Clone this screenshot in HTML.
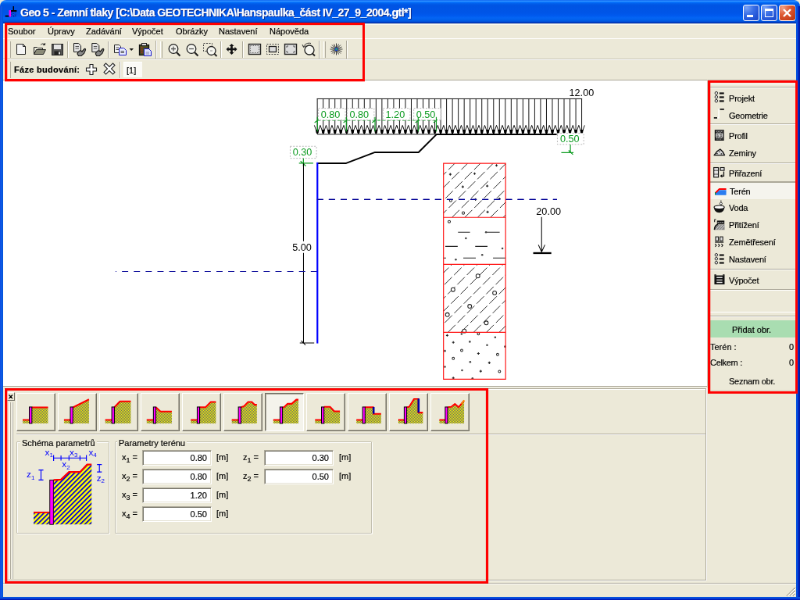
<!DOCTYPE html>
<html lang="cs">
<head>
<meta charset="utf-8">
<title>Geo 5 - Zemní tlaky</title>
<style>
html,body{margin:0;padding:0;}
body{width:800px;height:600px;overflow:hidden;background:#ece9d8;position:relative;}
#win{position:absolute;left:0;top:0;width:1024px;height:768px;background:#ece9d8;overflow:hidden;transform:scale(0.78125);transform-origin:0 0;will-change:transform;font-family:"Liberation Sans",sans-serif;font-size:11px;line-height:13px;color:#000;-webkit-text-stroke:0.18px #000;}
.abs{position:absolute;}
#bl{left:0;top:8px;width:4px;height:760px;background:linear-gradient(90deg,#0831d9 0,#166aee 1px,#0855dd 2px,#0453df 4px);}
#br{left:1019px;top:8px;width:5px;height:760px;background:linear-gradient(90deg,#0453df 0,#0a4fd8 2px,#0019cf 3px,#001ea0 4px);}
#bb{left:0;top:764px;width:1024px;height:4px;background:linear-gradient(180deg,#0453df 0,#0a4fd8 2px,#0019cf 3px,#001ea0 4px);}
#title{left:0;top:0;width:1024px;height:30px;background:linear-gradient(180deg,#0058ee 0,#3593ff 4%,#288eff 6%,#127dff 8%,#036ffc 10%,#0262ee 14%,#0057e5 20%,#0054e3 24%,#0055e8 56%,#0059ee 66%,#0464f4 76%,#005fea 86%,#0050d8 92%,#003cc0 95%,#0030b0 100%);border-radius:8px 8px 0 0;}
#title .t{-webkit-text-stroke:0.2px #fff;position:absolute;left:26px;top:9.9px;letter-spacing:-0.5px;font-weight:bold;font-size:14px;color:#fff;white-space:nowrap;text-shadow:1px 1px 0 #0a2a8a;}
.cb{position:absolute;top:6px;width:21px;height:21px;box-sizing:border-box;border:1px solid #fff;border-radius:3px;background:radial-gradient(circle at 20% 15%,#7aa2f5 0,#3a6fe6 40%,#2456d8 70%,#1c48c4 100%);}
.cb.x{background:radial-gradient(circle at 20% 15%,#f0a086 0,#de5b35 40%,#cd4520 70%,#b8340f 100%);}
.menu{position:absolute;top:34.2px;white-space:nowrap;}
.hl{position:absolute;height:1px;}
.vl{position:absolute;width:1px;}
.txt{position:absolute;white-space:nowrap;}
.inp{position:absolute;box-sizing:border-box;background:#fff;border:1px solid;border-color:#aca899 #fff #fff #aca899;box-shadow:inset 1px 1px 0 #77756a,inset -1px -1px 0 #e4e1d2;height:20px;width:89px;text-align:right;padding:3px 5px 0 0;line-height:13px;}
.grp{position:absolute;box-sizing:border-box;border:1px solid #c2bfae;border-radius:1px;box-shadow:1px 1px 0 #fff,inset 1px 1px 0 #fff;}
.grp b{position:absolute;left:7px;top:-5.5px;background:#ece9d8;padding:0 2px;font-weight:normal;white-space:nowrap;line-height:13px;}
.tb{position:absolute;top:503px;width:50px;height:49px;box-sizing:border-box;border:1px solid;border-color:#fff #716f64 #716f64 #fff;box-shadow:inset -1px -1px 0 #aca899;background:#ece9d8;}
.tb.sel{background:#f4f3eb;border-color:#716f64 #fff #fff #716f64;box-shadow:inset 1px 1px 0 #aca899;}
.tb svg{position:absolute;left:0;top:0;}
.rp{position:absolute;left:933px;white-space:nowrap;letter-spacing:-0.2px;}
.ri{position:absolute;left:913px;}
sub{font-size:9px;vertical-align:-3px;line-height:0;}
.red{position:absolute;box-sizing:border-box;border:2px solid #ff0000;}
</style>
</head>
<body>
<div id="win">
<!-- TITLEBAR -->
<div id="title" class="abs"><svg class="abs" style="left:0;top:0" width="38.4" height="30" viewBox="0 0 30 23.4375"><path d="M5.200 16.100H9.200" stroke="#000" stroke-width="1.400"/><path d="M10 10.200V16.700" stroke="#ff00ff" stroke-width="2"/><path d="M11 10.900H16.700" stroke="#000" stroke-width="1.500"/><path d="M13.500 6.200V10.500" stroke="#000" stroke-width="1.100"/><path d="M11.300 12.400L13 11.800M11.300 14.400L16.600 12.200M11.300 16.400L16.600 14.200M13.500 16.700L16.600 15.600" stroke="#141478" stroke-width="0.900" stroke-dasharray="0.900 0.900"/></svg><span class="t">Geo 5 - Zemní tlaky [C:\Data GEOTECHNIKA\Hanspaulka_část IV_27_9_2004.gtl*]</span>
<div class="cb" style="left:951px"><svg width="19" height="19"><rect x="4" y="12" width="8" height="3" fill="#fff"/></svg></div>
<div class="cb" style="left:974px"><svg width="19" height="19"><rect x="4.5" y="5.5" width="10" height="9" fill="none" stroke="#fff"/><rect x="4" y="4" width="11" height="3" fill="#fff"/></svg></div>
<div class="cb x" style="left:997px"><svg width="19" height="19"><path d="M5 5L14 14M14 5L5 14" stroke="#fff" stroke-width="2.4"/></svg></div>
</div>
<div class="hl" style="left:4px;top:31px;width:1016px;background:#fbfaf3"></div>
<!-- MENU BAR -->
<span class="menu" style="left:10px">Soubor</span>
<span class="menu" style="left:61px">Úpravy</span>
<span class="menu" style="left:110px">Zadávání</span>
<span class="menu" style="left:169px">Výpočet</span>
<span class="menu" style="left:225px">Obrázky</span>
<span class="menu" style="left:280px">Nastavení</span>
<span class="menu" style="left:345px">Nápověda</span>

<!-- TOOLBAR ROWS -->
<div class="hl" style="left:4px;top:49px;width:1016px;background:#fff"></div>
<div class="hl" style="left:4px;top:75px;width:1016px;background:#c5c2b2"></div>
<div class="hl" style="left:4px;top:76px;width:1016px;background:#fff"></div>
<div class="hl" style="left:4px;top:102px;width:1016px;background:#aca899"></div>
<!-- grips -->
<div class="vl" style="left:11px;top:53px;height:21px;background:#fff"></div><div class="vl" style="left:13px;top:53px;height:21px;background:#aca899"></div>
<div class="vl" style="left:205px;top:53px;height:21px;background:#fff"></div><div class="vl" style="left:207px;top:53px;height:21px;background:#aca899"></div>
<div class="vl" style="left:414px;top:53px;height:21px;background:#fff"></div><div class="vl" style="left:416px;top:53px;height:21px;background:#aca899"></div>
<div class="vl" style="left:11px;top:79px;height:21px;background:#fff"></div><div class="vl" style="left:13px;top:79px;height:21px;background:#aca899"></div>
<!-- toolbar ends -->
<div class="vl" style="left:199px;top:52px;height:23px;background:#aca899"></div><div class="vl" style="left:200px;top:52px;height:23px;background:#fff"></div>
<div class="vl" style="left:408px;top:52px;height:23px;background:#aca899"></div><div class="vl" style="left:409px;top:52px;height:23px;background:#fff"></div>
<div class="vl" style="left:443px;top:52px;height:23px;background:#aca899"></div><div class="vl" style="left:444px;top:52px;height:23px;background:#fff"></div>
<!-- separators -->
<div class="vl" style="left:86px;top:53px;height:21px;background:#aca899"></div><div class="vl" style="left:87px;top:53px;height:21px;background:#fff"></div>
<div class="vl" style="left:138px;top:53px;height:21px;background:#aca899"></div><div class="vl" style="left:139px;top:53px;height:21px;background:#fff"></div>
<div class="vl" style="left:282px;top:53px;height:21px;background:#aca899"></div><div class="vl" style="left:283px;top:53px;height:21px;background:#fff"></div>
<div class="vl" style="left:310px;top:53px;height:21px;background:#aca899"></div><div class="vl" style="left:311px;top:53px;height:21px;background:#fff"></div>
<div class="vl" style="left:153px;top:79px;height:21px;background:#aca899"></div><div class="vl" style="left:154px;top:79px;height:21px;background:#fff"></div>
<!-- ICONS row 1 -->
<svg class="abs" style="left:0;top:50px" width="460" height="26" viewBox="0 0 460 26">
<!-- new -->
<path d="M21.5 6.5H29.5L32.5 9.5V19.5H21.5Z" fill="#f4f4f4" stroke="#222"/><path d="M29.5 6.5V9.5H32.5" fill="none" stroke="#222"/>
<!-- open -->
<path d="M43.5 19.5V10.5H47.5L48.5 11.5H54.5V13.5" fill="#e8e8d8" stroke="#222"/><path d="M43.5 19.5L46.5 13.5H58.5L55.5 19.5Z" fill="#8a8a78" stroke="#222"/><path d="M52 7.5C54 5.5 56 5.5 57.5 7.5M57.5 7.5V5M57.5 7.5H55" fill="none" stroke="#222"/>
<!-- save -->
<rect x="66.500" y="6.500" width="14" height="14" fill="#555" stroke="#222"/><rect x="69" y="7" width="9" height="6" fill="#e4e4e4"/><rect x="69.500" y="15.500" width="8" height="5" fill="#222"/><rect x="75" y="16.500" width="2" height="3" fill="#ddd"/>
<!-- doc+hand 1 -->
<g id="dh"><path d="M94.500 5.500H100.500L103.500 8.500V16.500H94.500Z" fill="#e2e2e2" stroke="#1a1a1a"/><path d="M96.500 9.500H101M96.500 12H101" stroke="#555"/><path d="M99 19C100 15 103 14 105 16L108 12.500C109.500 12 110 13.500 109 15L107.500 18.500L104 21.500H100.500Z" fill="#8a8a8a" stroke="#1a1a1a" stroke-width="1.200"/></g>
<use href="#dh" x="23.300"/>
<!-- copy -->
<path d="M146.500 7.500H152.500L154.500 9.500V17.500H146.500Z" fill="#f2f2f2" stroke="#222"/><path d="M148.500 11H152M148.500 13.500H152" stroke="#444"/>
<path d="M152.500 11.500H158.500L161.500 14.500V20.500H152.500Z" fill="#e8ecff" stroke="#1a1ac8"/><path d="M154.500 15.500H159M154.500 17.500H159" stroke="#444" />
<path d="M165.500 12H171L168.250 15Z" fill="#111"/>
<!-- paste -->
<rect x="178.500" y="7.500" width="12" height="13" fill="#4a4a20" stroke="#111" stroke-width="1.300"/><rect x="181.500" y="5.500" width="6" height="3" fill="#ddd" stroke="#222"/><path d="M180.500 11h2M180.500 14h2M180.500 17h2" stroke="#d22"/>
<path d="M184.500 12.500H190.500L193.500 15.500V21.500H184.500Z" fill="#dfe4ff" stroke="#1a1ac8"/><path d="M186.500 17H191M186.500 19H191" stroke="#88a"/>
<!-- zoom + -->
<circle cx="222" cy="12.500" r="5.800" fill="#f6f6f0" stroke="#222" stroke-width="1.300"/><path d="M226 17L230.500 21.500" stroke="#222" stroke-width="2.200"/><path d="M219 12.500H225M222 9.500V15.500" stroke="#555" stroke-width="1.300"/>
<!-- zoom - -->
<circle cx="245" cy="12.500" r="5.800" fill="#f6f6f0" stroke="#222" stroke-width="1.300"/><path d="M249 17L253.500 21.500" stroke="#222" stroke-width="2.200"/><path d="M242 12.500H248" stroke="#555" stroke-width="1.300"/>
<!-- zoom rect -->
<rect x="260.500" y="5.500" width="11" height="10" fill="none" stroke="#444" stroke-dasharray="2 1.500"/><circle cx="270.500" cy="15" r="5.500" fill="#f6f6f0" stroke="#222" stroke-width="1.300"/><path d="M274.500 19L277.500 22" stroke="#222" stroke-width="2"/><path d="M269 15h3" stroke="#888"/>
<!-- pan -->
<path transform="translate(296.500 13) scale(0.880) translate(-296.500 -13)" d="M296.500 5L300 8.500H298V11.500H301V9.500L304.500 13L301 16.500V14.500H298V17.500H300L296.500 21L293 17.500H295V14.500H292V16.500L288.500 13L292 9.500V11.500H295V8.500H293Z" fill="#111"/>
<!-- rect1 -->
<rect x="318.500" y="6.500" width="15" height="13" fill="#ddd" stroke="#222" stroke-width="1.400"/><rect x="320.500" y="8.500" width="11" height="9" fill="none" stroke="#666" stroke-dasharray="1.500 1.500"/>
<!-- rect2 -->
<rect x="341.500" y="6.500" width="15" height="13" fill="none" stroke="#444" stroke-dasharray="2 1.500"/><rect x="344.500" y="9.500" width="9" height="7" fill="#ddd" stroke="#222" stroke-width="1.300"/>
<!-- rect3 -->
<rect x="364.500" y="6.500" width="15" height="13" fill="#ddd" stroke="#222" stroke-width="1.400"/><path d="M367 11V9H369M375 9H377V11M377 15V17H375M369 17H367V15" fill="none" stroke="#555"/>
<!-- rotate -->
<circle cx="396" cy="14" r="6" fill="#f6f6f0" stroke="#222" stroke-width="1.300"/><path d="M388.500 10C390 6 394 4.500 398 5.500" fill="none" stroke="#333"/><path d="M387 7L388.500 10.500L391.500 8.500" fill="none" stroke="#333"/><path d="M400 18.500L403 21.500" stroke="#222" stroke-width="2"/>
<!-- star -->
<path d="M430.500 5.500V20.500M422.500 13H438.500M425 7.500L436 18.500M436 7.500L425 18.500M427.500 6.500L433.500 19.500M433.500 6.500L427.500 19.500M423.500 10L437.500 16M437.500 10L423.500 16" stroke="#222" stroke-width="0.900"/><circle cx="430.500" cy="13" r="2.200" fill="#1a4ad0"/><circle cx="430.500" cy="13" r="1" fill="#3c3"/>
</svg>
<!-- row 2 -->
<span class="txt" style="left:18px;top:82.5px;font-weight:bold;letter-spacing:0.3px">Fáze budování:</span>
<svg class="abs" style="left:100px;top:76px" width="100" height="26" viewBox="100 0 100 26">
<path d="M115 6.500H119V11H123.500V15H119V19.500H115V15H110.500V11H115Z" fill="#fff" stroke="#222" stroke-width="1.100"/>
<path d="M133 7.500L135.500 5L140 9.500L144.500 5L147 7.500L142.500 12L147 16.500L144.500 19L140 14.500L135.500 19L133 16.500L137.500 12Z" fill="#fff" stroke="#2a2a2a" stroke-width="1.1"/>
</svg>
<div class="abs" style="left:158px;top:79px;width:24px;height:20px;background:#fbfaf6;border-left:1px solid #fff;border-top:1px solid #fff;box-sizing:border-box"></div>
<span class="txt" style="left:162px;top:84px">[1]</span>

<div class="abs" style="left:4px;top:103px;width:901px;height:391px;background:#fff"></div>
<svg class="abs" style="left:0;top:0" width="1024" height="768" viewBox="0 0 800 600" font-family="'Liberation Sans',sans-serif" font-size="9.9">
<defs><clipPath id="c1"><rect x="443.5" y="163.4" width="62" height="54"/></clipPath><clipPath id="c3"><rect x="443.5" y="264.3" width="62" height="68"/></clipPath></defs>
<path d="M317.30 98.80V133.30M323.18 98.80V133.30M329.05 98.80V133.30M334.93 98.80V133.30M340.80 98.80V133.30M346.68 98.80V133.30M352.55 98.80V133.30M358.43 98.80V133.30M364.30 98.80V133.30M370.18 98.80V133.30M376.06 98.80V133.30M381.93 98.80V133.30M387.81 98.80V133.30M393.68 98.80V133.30M399.56 98.80V133.30M405.43 98.80V133.30M411.31 98.80V133.30M417.18 98.80V133.30M423.06 98.80V133.30M428.94 98.80V133.30M434.81 98.80V133.30M440.69 98.80V133.30M446.56 98.80V133.30M452.44 98.80V133.30M458.31 98.80V133.30M464.19 98.80V133.30M470.06 98.80V133.30M475.94 98.80V133.30M481.82 98.80V133.30M487.69 98.80V133.30M493.57 98.80V133.30M499.44 98.80V133.30M505.32 98.80V133.30M511.19 98.80V133.30M517.07 98.80V133.30M522.94 98.80V133.30M528.82 98.80V133.30M534.70 98.80V133.30M540.57 98.80V133.30M546.45 98.80V133.30M552.32 98.80V133.30M558.20 98.80V133.30M564.07 98.80V133.30M569.95 98.80V133.30M575.82 98.80V133.30M581.70 98.80V133.30" stroke="#000" stroke-width="0.72" fill="none"/>
<path d="M316.90 98.80H582.10" stroke="#000" stroke-width="0.72"/>
<path d="M317.30 134.30H581.70" stroke="#000" stroke-width="0.72"/>
<path d="M314.36 125.30L317.30 133.60L320.24 125.30L323.18 133.60L326.11 125.30L329.05 133.60L331.99 125.30L334.93 133.60L337.86 125.30L340.80 133.60L343.74 125.30L346.68 133.60L349.62 125.30L352.55 133.60L355.49 125.30L358.43 133.60L361.37 125.30L364.30 133.60L367.24 125.30L370.18 133.60L373.12 125.30L376.06 133.60L378.99 125.30L381.93 133.60L384.87 125.30L387.81 133.60L390.74 125.30L393.68 133.60L396.62 125.30L399.56 133.60L402.50 125.30L405.43 133.60L408.37 125.30L411.31 133.60L414.25 125.30L417.18 133.60L420.12 125.30L423.06 133.60L426.00 125.30L428.94 133.60L431.87 125.30L434.81 133.60L437.75 125.30L440.69 133.60L443.62 125.30L446.56 133.60L449.50 125.30L452.44 133.60L455.38 125.30L458.31 133.60L461.25 125.30L464.19 133.60L467.13 125.30L470.06 133.60L473.00 125.30L475.94 133.60L478.88 125.30L481.82 133.60L484.75 125.30L487.69 133.60L490.63 125.30L493.57 133.60L496.50 125.30L499.44 133.60L502.38 125.30L505.32 133.60L508.26 125.30L511.19 133.60L514.13 125.30L517.07 133.60L520.01 125.30L522.94 133.60L525.88 125.30L528.82 133.60L531.76 125.30L534.70 133.60L537.63 125.30L540.57 133.60L543.51 125.30L546.45 133.60L549.38 125.30L552.32 133.60L555.26 125.30L558.20 133.60L561.14 125.30L564.07 133.60L567.01 125.30L569.95 133.60L572.89 125.30L575.82 133.60L578.76 125.30L581.70 133.60L584.64 125.30" stroke="#000" stroke-width="0.72" fill="none" stroke-linejoin="miter"/>
<path d="M315.80 129.60L318.80 129.60L318.55 132.60L317.30 134.30L316.05 132.60ZM321.68 129.60L324.68 129.60L324.43 132.60L323.18 134.30L321.93 132.60ZM327.55 129.60L330.55 129.60L330.30 132.60L329.05 134.30L327.80 132.60ZM333.43 129.60L336.43 129.60L336.18 132.60L334.93 134.30L333.68 132.60ZM339.30 129.60L342.30 129.60L342.05 132.60L340.80 134.30L339.55 132.60ZM345.18 129.60L348.18 129.60L347.93 132.60L346.68 134.30L345.43 132.60ZM351.05 129.60L354.05 129.60L353.80 132.60L352.55 134.30L351.30 132.60ZM356.93 129.60L359.93 129.60L359.68 132.60L358.43 134.30L357.18 132.60ZM362.80 129.60L365.80 129.60L365.55 132.60L364.30 134.30L363.05 132.60ZM368.68 129.60L371.68 129.60L371.43 132.60L370.18 134.30L368.93 132.60ZM374.56 129.60L377.56 129.60L377.31 132.60L376.06 134.30L374.81 132.60ZM380.43 129.60L383.43 129.60L383.18 132.60L381.93 134.30L380.68 132.60ZM386.31 129.60L389.31 129.60L389.06 132.60L387.81 134.30L386.56 132.60ZM392.18 129.60L395.18 129.60L394.93 132.60L393.68 134.30L392.43 132.60ZM398.06 129.60L401.06 129.60L400.81 132.60L399.56 134.30L398.31 132.60ZM403.93 129.60L406.93 129.60L406.68 132.60L405.43 134.30L404.18 132.60ZM409.81 129.60L412.81 129.60L412.56 132.60L411.31 134.30L410.06 132.60ZM415.68 129.60L418.68 129.60L418.43 132.60L417.18 134.30L415.93 132.60ZM421.56 129.60L424.56 129.60L424.31 132.60L423.06 134.30L421.81 132.60ZM427.44 129.60L430.44 129.60L430.19 132.60L428.94 134.30L427.69 132.60ZM433.31 129.60L436.31 129.60L436.06 132.60L434.81 134.30L433.56 132.60ZM439.19 129.60L442.19 129.60L441.94 132.60L440.69 134.30L439.44 132.60ZM445.06 129.60L448.06 129.60L447.81 132.60L446.56 134.30L445.31 132.60ZM450.94 129.60L453.94 129.60L453.69 132.60L452.44 134.30L451.19 132.60ZM456.81 129.60L459.81 129.60L459.56 132.60L458.31 134.30L457.06 132.60ZM462.69 129.60L465.69 129.60L465.44 132.60L464.19 134.30L462.94 132.60ZM468.56 129.60L471.56 129.60L471.31 132.60L470.06 134.30L468.81 132.60ZM474.44 129.60L477.44 129.60L477.19 132.60L475.94 134.30L474.69 132.60ZM480.32 129.60L483.32 129.60L483.07 132.60L481.82 134.30L480.57 132.60ZM486.19 129.60L489.19 129.60L488.94 132.60L487.69 134.30L486.44 132.60ZM492.07 129.60L495.07 129.60L494.82 132.60L493.57 134.30L492.32 132.60ZM497.94 129.60L500.94 129.60L500.69 132.60L499.44 134.30L498.19 132.60ZM503.82 129.60L506.82 129.60L506.57 132.60L505.32 134.30L504.07 132.60ZM509.69 129.60L512.69 129.60L512.44 132.60L511.19 134.30L509.94 132.60ZM515.57 129.60L518.57 129.60L518.32 132.60L517.07 134.30L515.82 132.60ZM521.44 129.60L524.44 129.60L524.19 132.60L522.94 134.30L521.69 132.60ZM527.32 129.60L530.32 129.60L530.07 132.60L528.82 134.30L527.57 132.60ZM533.20 129.60L536.20 129.60L535.95 132.60L534.70 134.30L533.45 132.60ZM539.07 129.60L542.07 129.60L541.82 132.60L540.57 134.30L539.32 132.60ZM544.95 129.60L547.95 129.60L547.70 132.60L546.45 134.30L545.20 132.60ZM550.82 129.60L553.82 129.60L553.57 132.60L552.32 134.30L551.07 132.60ZM556.70 129.60L559.70 129.60L559.45 132.60L558.20 134.30L556.95 132.60ZM562.57 129.60L565.57 129.60L565.32 132.60L564.07 134.30L562.82 132.60ZM568.45 129.60L571.45 129.60L571.20 132.60L569.95 134.30L568.70 132.60ZM574.32 129.60L577.32 129.60L577.07 132.60L575.82 134.30L574.57 132.60ZM580.20 129.60L583.20 129.60L582.95 132.60L581.70 134.30L580.45 132.60Z" fill="#000"/>
<path d="M317.4 120.3H436.3" stroke="#0a9a1e" stroke-width="0.8" stroke-dasharray="3 2"/>
<rect x="318.4" y="108.3" width="27.0" height="11.8" fill="#fff" stroke="#b0b0b0" stroke-width="0.7" stroke-dasharray="1.5 1.5"/>
<text x="320.9" y="117.7" fill="#0a9a1e">0.80</text>
<rect x="347.1" y="108.3" width="27.0" height="11.8" fill="#fff" stroke="#b0b0b0" stroke-width="0.7" stroke-dasharray="1.5 1.5"/>
<text x="349.6" y="117.7" fill="#0a9a1e">0.80</text>
<rect x="383.1" y="108.3" width="27.0" height="11.8" fill="#fff" stroke="#b0b0b0" stroke-width="0.7" stroke-dasharray="1.5 1.5"/>
<text x="385.6" y="117.7" fill="#0a9a1e">1.20</text>
<rect x="413.8" y="108.3" width="27.0" height="11.8" fill="#fff" stroke="#b0b0b0" stroke-width="0.7" stroke-dasharray="1.5 1.5"/>
<text x="416.2" y="117.7" fill="#0a9a1e">0.50</text>
<path d="M317.4 117V131.5M314.6 122.6L318.4 119.6" stroke="#0a9a1e" stroke-width="0.9" fill="none"/>
<path d="M346.3 117V131.5M343.5 122.6L347.3 119.6" stroke="#0a9a1e" stroke-width="0.9" fill="none"/>
<path d="M375.0 117V131.5M372.2 122.6L376.0 119.6" stroke="#0a9a1e" stroke-width="0.9" fill="none"/>
<path d="M418.2 117V131.5M415.4 122.6L419.2 119.6" stroke="#0a9a1e" stroke-width="0.9" fill="none"/>
<path d="M436.3 117V131.5M433.5 122.6L437.3 119.6" stroke="#0a9a1e" stroke-width="0.9" fill="none"/>
<text x="569.2" y="95.9" fill="#000">12.00</text>
<path d="M317 163.2H346.2L375 152.3H418.5L436.6 134.3H556.5" stroke="#000" stroke-width="1.55" fill="none" stroke-linejoin="round"/>
<rect x="557.4" y="133.2" width="26.3" height="11.2" fill="#fff" stroke="#b0b0b0" stroke-width="0.7" stroke-dasharray="1.5 1.5"/>
<text x="560.2" y="141.8" fill="#0a9a1e">0.50</text>
<path d="M570.4 144.5V153.2M561.3 152.6H573.5M568.6 150.4L573 154.6" stroke="#0a9a1e" stroke-width="0.9" fill="none"/>
<rect x="290.2" y="146.3" width="26.3" height="12" fill="#fff" stroke="#b0b0b0" stroke-width="0.7" stroke-dasharray="1.5 1.5"/>
<text x="292.8" y="155.7" fill="#0a9a1e">0.30</text>
<path d="M303.4 158.4V166.5M299 163.2H313.2M300.5 161L305.8 166" stroke="#0a9a1e" stroke-width="0.9" fill="none"/>
<path d="M303.5 163.5V241.2M303.5 252.9V343.3M299.8 343H314.2M301.2 340.8L305.5 345" stroke="#000" stroke-width="0.8" fill="none"/>
<text x="292.3" y="250.9" fill="#000">5.00</text>
<path d="M317 199.5H557" stroke="#10109c" stroke-width="0.85" stroke-dasharray="6.2 5.6"/>
<path d="M317 271.5H115.6" stroke="#10109c" stroke-width="0.85" stroke-dasharray="6.2 5.6"/>
<path d="M317.4 162.4V343.4" stroke="#0000ff" stroke-width="1.7"/>
<path d="M324.0 217.4L380.0 161.4M336.8 217.4L392.8 161.4M349.6 217.4L405.6 161.4M362.4 217.4L418.4 161.4M375.2 217.4L431.2 161.4M388.0 217.4L444.0 161.4M400.8 217.4L456.8 161.4M413.6 217.4L469.6 161.4M426.4 217.4L482.4 161.4M439.2 217.4L495.2 161.4M452.0 217.4L508.0 161.4M464.8 217.4L520.8 161.4M477.6 217.4L533.6 161.4M490.4 217.4L546.4 161.4M503.2 217.4L559.2 161.4" stroke="#222" stroke-width="0.75" stroke-dasharray="10.5 3" fill="none" clip-path="url(#c1)"/>
<path d="M320.0 332.3L390.0 262.3M332.8 332.3L402.8 262.3M345.6 332.3L415.6 262.3M358.4 332.3L428.4 262.3M371.2 332.3L441.2 262.3M384.0 332.3L454.0 262.3M396.8 332.3L466.8 262.3M409.6 332.3L479.6 262.3M422.4 332.3L492.4 262.3M435.2 332.3L505.2 262.3M448.0 332.3L518.0 262.3M460.8 332.3L530.8 262.3M473.6 332.3L543.6 262.3M486.4 332.3L556.4 262.3M499.2 332.3L569.2 262.3" stroke="#222" stroke-width="0.75" stroke-dasharray="10.5 3" fill="none" clip-path="url(#c3)"/>
<path d="M449.1 174.3h2.4M450.3 173.1v2.4" stroke="#222" stroke-width="0.9"/>
<path d="M473.4 173.6h2.4M474.6 172.4v2.4" stroke="#222" stroke-width="0.9"/>
<path d="M495.3 165.4h2.4M496.5 164.2v2.4" stroke="#222" stroke-width="0.9"/>
<path d="M461.6 186.8h2.4M462.8 185.6v2.4" stroke="#222" stroke-width="0.9"/>
<path d="M486.0 186.0h2.4M487.2 184.8v2.4" stroke="#222" stroke-width="0.9"/>
<circle cx="450.7" cy="200.6" r="1.2" fill="#fff" stroke="#222" stroke-width="0.8"/>
<circle cx="463.3" cy="213.0" r="1.2" fill="#fff" stroke="#222" stroke-width="0.8"/>
<path d="M486.4 212.0h2.4M487.6 210.8v2.4" stroke="#222" stroke-width="0.9"/>
<path d="M474.3 199.5h2.4M475.5 198.3v2.4" stroke="#222" stroke-width="0.9"/>
<path d="M498.3 198.8h2.4M499.5 197.6v2.4" stroke="#222" stroke-width="0.9"/>
<path d="M458.0 232.2H470.0M485.7 232.2H499.7M445.3 246.4H457.7M475.2 246.4H487.5M443.6 258.0H446.0M463.3 258.0H475.8M493.0 258.0H505.3" stroke="#222" stroke-width="0.9"/>
<circle cx="449.2" cy="221.7" r="1.2" fill="#fff" stroke="#222" stroke-width="0.8"/>
<circle cx="465.9" cy="238.3" r="1" fill="#444"/>
<circle cx="502.4" cy="248.5" r="1" fill="#444"/>
<circle cx="482.2" cy="254.9" r="1" fill="#444"/>
<circle cx="455.8" cy="259.6" r="1" fill="#444"/>
<circle cx="486.0" cy="232.2" r="1" fill="#444"/>
<circle cx="477.9" cy="276.0" r="1.9" fill="#fff" stroke="#222" stroke-width="0.8"/>
<circle cx="453.0" cy="289.6" r="1.9" fill="#fff" stroke="#222" stroke-width="0.8"/>
<circle cx="494.6" cy="292.9" r="1.9" fill="#fff" stroke="#222" stroke-width="0.8"/>
<circle cx="469.7" cy="306.3" r="1.9" fill="#fff" stroke="#222" stroke-width="0.8"/>
<circle cx="447.4" cy="314.7" r="1.9" fill="#fff" stroke="#222" stroke-width="0.8"/>
<circle cx="486.3" cy="322.9" r="1.9" fill="#fff" stroke="#222" stroke-width="0.8"/>
<circle cx="464.3" cy="331.0" r="1.9" fill="#fff" stroke="#222" stroke-width="0.8"/>
<path d="M446.0 335.4h2.4M447.2 334.2v2.4" stroke="#222" stroke-width="0.9"/>
<circle cx="461.6" cy="334.0" r="1" fill="#444"/>
<circle cx="478.4" cy="333.8" r="1.1" fill="#fff" stroke="#222" stroke-width="0.8"/>
<circle cx="495.2" cy="337.3" r="1" fill="#444"/>
<path d="M452.1 342.4h2.4M453.3 341.2v2.4" stroke="#222" stroke-width="0.9"/>
<circle cx="469.8" cy="341.7" r="1" fill="#444"/>
<circle cx="487.1" cy="345.1" r="1" fill="#444"/>
<circle cx="505.0" cy="346.6" r="1" fill="#444"/>
<circle cx="444.9" cy="350.9" r="1" fill="#444"/>
<circle cx="461.7" cy="350.4" r="1.1" fill="#fff" stroke="#222" stroke-width="0.8"/>
<path d="M477.2 353.5h2.4M478.4 352.3v2.4" stroke="#222" stroke-width="0.9"/>
<circle cx="497.6" cy="354.5" r="1.1" fill="#fff" stroke="#222" stroke-width="0.8"/>
<circle cx="453.3" cy="358.4" r="1.1" fill="#fff" stroke="#222" stroke-width="0.8"/>
<circle cx="470.2" cy="362.0" r="1" fill="#444"/>
<path d="M488.1 362.8h2.4M489.3 361.6v2.4" stroke="#222" stroke-width="0.9"/>
<circle cx="444.9" cy="366.8" r="1" fill="#444"/>
<circle cx="462.1" cy="370.3" r="1" fill="#444"/>
<path d="M479.5 371.2h2.4M480.7 370.0v2.4" stroke="#222" stroke-width="0.9"/>
<circle cx="499.5" cy="371.5" r="1.1" fill="#fff" stroke="#222" stroke-width="0.8"/>
<path d="M452.1 378.0h2.4M453.3 376.8v2.4" stroke="#222" stroke-width="0.9"/>
<circle cx="472.5" cy="378.3" r="1" fill="#444"/>
<path d="M443.5 163.4H505.6V379.2H443.5ZM443.5 217.4H505.6M443.5 264.3H505.6M443.5 332.3H505.6" stroke="#ff1010" stroke-width="0.9" fill="none"/>
<path d="M317 199.5H557" stroke="#10109c" stroke-width="0.85" stroke-dasharray="6.2 5.6"/>
<text x="536.2" y="214.8" fill="#000">20.00</text>
<path d="M541.6 217V252M538.4 244.8L541.6 252L544.9 244.8" stroke="#000" stroke-width="0.8" fill="none"/>
<path d="M533.2 253.1H551.3" stroke="#000" stroke-width="1.8"/>
</svg>
<!-- RIGHT PANEL -->
<div class="vl" style="left:905px;top:102px;height:394px;background:#c9c6b6"></div>
<div class="hl" style="left:907px;top:107px;width:113px;background:#fff"></div>
<div class="hl" style="left:907px;top:111px;width:113px;background:#aca899"></div>
<div class="hl" style="left:907px;top:112px;width:113px;background:#fff"></div>
<div class="abs" style="left:908px;top:233px;width:111px;height:22px;background:#f5f4ed;border-top:1px solid #aca899;border-left:1px solid #aca899;box-sizing:border-box"></div>
<span class="rp" style="left:933px;top:119.7px">Projekt</span>
<span class="rp" style="left:933px;top:142.0px">Geometrie</span>
<span class="rp" style="left:933px;top:167.7px">Profil</span>
<span class="rp" style="left:933px;top:190.0px">Zeminy</span>
<span class="rp" style="left:933px;top:215.9px">Přiřazení</span>
<span class="rp" style="left:934px;top:239.1px">Terén</span>
<span class="rp" style="left:933px;top:259.9px">Voda</span>
<span class="rp" style="left:933px;top:281.8px">Přitížení</span>
<span class="rp" style="left:933px;top:303.6px">Zemětřesení</span>
<span class="rp" style="left:933px;top:325.5px">Nastavení</span>
<span class="rp" style="left:933px;top:352.7px">Výpočet</span>
<div class="hl" style="left:907px;top:158px;width:113px;background:#aca899"></div>
<div class="hl" style="left:907px;top:159px;width:113px;background:#fff"></div>
<div class="hl" style="left:907px;top:208px;width:113px;background:#aca899"></div>
<div class="hl" style="left:907px;top:209px;width:113px;background:#fff"></div>
<div class="hl" style="left:907px;top:344px;width:113px;background:#aca899"></div>
<div class="hl" style="left:907px;top:345px;width:113px;background:#fff"></div>
<div class="hl" style="left:907px;top:370px;width:113px;background:#aca899"></div>
<div class="hl" style="left:907px;top:371px;width:113px;background:#fff"></div>
<div class="hl" style="left:907px;top:232px;width:113px;background:#aca899"></div>
<div class="hl" style="left:907px;top:399px;width:113px;background:#fff"></div>
<div class="hl" style="left:907px;top:404px;width:113px;background:#aca899"></div>
<div class="hl" style="left:907px;top:405px;width:113px;background:#fff"></div>
<div class="abs" style="left:908px;top:410px;width:112px;height:22px;background:#a9ddb1"></div>
<span class="txt" style="left:937px;top:416.2px">Přidat obr.</span>
<span class="txt" style="left:909px;top:437.8px">Terén :</span>
<span class="txt" style="left:1010px;top:437.8px">0</span>
<span class="txt" style="letter-spacing:-0.3px;left:909px;top:458.1px">Celkem :</span>
<span class="txt" style="left:1010px;top:458.1px">0</span>
<span class="txt" style="letter-spacing:-0.25px;left:933px;top:481.8px">Seznam obr.</span>
<div class="hl" style="left:907px;top:499px;width:113px;background:#d5d2c2"></div>
<svg class="abs" style="left:0;top:0" width="1024" height="768" viewBox="0 0 800 600">
<circle cx="716.3" cy="93.1" r="1.35" fill="#fff" stroke="#111" stroke-width="0.75"/>
<path d="M719.4 93.3H724" stroke="#111" stroke-width="1.7"/>
<circle cx="716.3" cy="97.0" r="1.35" fill="#fff" stroke="#111" stroke-width="0.75"/>
<path d="M719.4 97.2H724" stroke="#111" stroke-width="1.7"/>
<circle cx="716.3" cy="100.9" r="1.35" fill="#fff" stroke="#111" stroke-width="0.75"/>
<path d="M719.4 101.1H724" stroke="#111" stroke-width="1.7"/>
<path d="M717.2 117.8H718.8V109.4H720" fill="none" stroke="#fff" stroke-width="1.1"/>
<path d="M713.9 117.9H717.2M719.9 109.3H724.1" stroke="#111" stroke-width="1.5"/>
<rect x="715.2" y="130.3" width="8.3" height="9.8" fill="#f0f0f0" stroke="#111" stroke-width="1"/>
<rect x="715.6" y="130.8" width="7.5" height="2.6" fill="#2a2a2a"/>
<rect x="715.6" y="137.2" width="7.5" height="2.6" fill="#2a2a2a"/>
<path d="M716.2 131.6h0.7m1 0h0.7m1 0h0.7m1 0h0.7M716.9 132.7h0.7m1 0h0.7m1 0h0.7M716.2 138h0.7m1 0h0.7m1 0h0.7m1 0h0.7M716.9 139.1h0.7m1 0h0.7m1 0h0.7" stroke="#eee" stroke-width="0.6"/>
<path d="M716.4 134.6H718.4M719.4 134.6H722.2M716.4 136H719M720 136H722.2" stroke="#333" stroke-width="0.9"/>
<path d="M714.2 155.2L717 151.5L720.2 149.2L722.6 151.5L724.6 155.2Z" fill="#ddd" stroke="#111" stroke-width="1.1" stroke-linejoin="round"/>
<path d="M716.5 153.6h1.2M719 151.8h1.2M720.8 153.8h1.2" stroke="#222" stroke-width="0.9"/>
<rect x="713.8" y="167.6" width="4.6" height="9.6" fill="#e4e4e4" stroke="#111" stroke-width="0.9"/>
<path d="M714.3 170.5H718M714.3 174.3H718" stroke="#222" stroke-width="1.2" stroke-dasharray="0.9 0.7"/>
<rect x="720.4" y="167.6" width="3.8" height="2.8" fill="#eee" stroke="#111" stroke-width="0.9"/>
<path d="M723.8 171.5V176H720.6" fill="none" stroke="#111" stroke-width="1"/>
<path d="M722.2 174.2L720 176L722.2 177.8Z" fill="#111"/>
<path d="M715.6 195.1V192.9L719.4 190H726.2V195.1Z" fill="#2a7cf0"/>
<path d="M715.8 192.6L719.4 189H726.2" fill="none" stroke="#ff0000" stroke-width="1.5"/>
<path d="M715.3 192.2V195" stroke="#083" stroke-width="0.9"/>
<path d="M714 207.2C714 210.5 716 212.6 719.2 212.6C722.4 212.6 724.4 210.5 724.4 207.2Z" fill="#111"/>
<ellipse cx="719.2" cy="207.3" rx="5.1" ry="1.8" fill="#fff" stroke="#111" stroke-width="0.9"/>
<circle cx="721" cy="203.6" r="1.15" fill="#fff" stroke="#111" stroke-width="0.7"/>
<circle cx="721" cy="201" r="0.6" fill="#111"/>
<path d="M714.6 219.4V222M714.6 219.6H716" stroke="#111" stroke-width="0.8" fill="none"/>
<rect x="717" y="220.6" width="7.4" height="3.4" fill="#111"/>
<path d="M717.6 222.3H724" stroke="#ccc" stroke-width="0.8" stroke-dasharray="1.2 0.8"/>
<path d="M714.4 229.8C714.6 226.5 716 224.6 718 224.4H724.6V229.8Z" fill="#888"/>
<path d="M714.4 229.8C714.6 226.5 716 224.6 718 224.4" fill="none" stroke="#111" stroke-width="1.2"/>
<path d="M716 229.5L720 225M718.5 229.5L722.5 225M721 229.5L724.6 225.5" stroke="#eee" stroke-width="0.6"/>
<rect x="715.6" y="236.8" width="2.8" height="4" fill="#ddd" stroke="#111" stroke-width="0.8"/>
<rect x="720" y="236.8" width="2.8" height="4" fill="#ddd" stroke="#111" stroke-width="0.8"/>
<path d="M715 242.2H723.6" stroke="#111" stroke-width="1"/>
<path d="M715 243.8L716.4 245.4L715.2 246.8M718.2 243.8L719.6 245.4L718.4 246.8M721.4 243.8L722.8 245.4L721.6 246.8" fill="none" stroke="#111" stroke-width="0.8"/>
<circle cx="716.3" cy="254.9" r="1.35" fill="#fff" stroke="#111" stroke-width="0.75"/>
<path d="M719.4 255.1H724" stroke="#111" stroke-width="1.7"/>
<circle cx="716.3" cy="258.8" r="1.35" fill="#fff" stroke="#111" stroke-width="0.75"/>
<path d="M719.4 259.0H724" stroke="#111" stroke-width="1.7"/>
<circle cx="716.3" cy="262.7" r="1.35" fill="#fff" stroke="#111" stroke-width="0.75"/>
<path d="M719.4 262.9H724" stroke="#111" stroke-width="1.7"/>
<rect x="714.4" y="275.4" width="10.2" height="9" fill="#111"/>
<path d="M716.6 277.6H722.4M716.6 280H722.4M716.6 282.4H722.4" stroke="#e8e8e8" stroke-width="1.1"/>
<path d="M714.4 275H716.2M722.8 275H724.6" stroke="#111" stroke-width="1"/>
</svg>
<!-- BOTTOM PANEL -->
<div class="hl" style="left:4px;top:494px;width:901px;background:#aca899"></div>
<div class="hl" style="left:4px;top:495px;width:901px;background:#f4f2e8"></div>
<div class="hl" style="left:6px;top:497px;width:898px;background:#aca899"></div>
<div class="hl" style="left:6px;top:498px;width:898px;background:#fff"></div>
<div class="vl" style="left:903px;top:497px;height:246px;background:#aca899"></div>
<div class="vl" style="left:904px;top:497px;height:246px;background:#fff"></div>
<div class="hl" style="left:6px;top:742px;width:898px;background:#aca899"></div>
<div class="hl" style="left:6px;top:743px;width:898px;background:#fff"></div>
<div class="hl" style="left:21px;top:555px;width:882px;background:#aca899"></div>
<div class="hl" style="left:21px;top:556px;width:882px;background:#fff"></div>
<div class="abs" style="left:9px;top:502px;width:10px;height:11px;box-sizing:border-box;border:1px solid;border-color:#fff #716f64 #716f64 #fff;background:#ece9d8"></div>
<svg class="abs" style="left:9px;top:503px" width="10" height="10"><path d="M2.500 2.500L7 7M7 2.500L2.500 7" stroke="#000" stroke-width="1.400"/></svg>
<div class="vl" style="left:12px;top:515px;height:226px;background:#fff"></div>
<div class="vl" style="left:13px;top:515px;height:226px;background:#aca899"></div>
<div class="vl" style="left:15px;top:515px;height:226px;background:#fff"></div>
<div class="vl" style="left:16px;top:515px;height:226px;background:#aca899"></div>
<div class="tb" style="left:21px"></div>
<div class="tb" style="left:74px"></div>
<div class="tb" style="left:127px"></div>
<div class="tb" style="left:180px"></div>
<div class="tb" style="left:233px"></div>
<div class="tb" style="left:286px"></div>
<div class="tb sel" style="left:339px"></div>
<div class="tb" style="left:392px"></div>
<div class="tb" style="left:445px"></div>
<div class="tb" style="left:498px"></div>
<div class="tb" style="left:551px"></div>
<div class="grp" style="left:21px;top:565px;width:119px;height:118px"><b style="left:4px">Schéma parametrů</b></div>
<div class="grp" style="left:147px;top:565px;width:329px;height:118px"><b style="left:2px">Parametry terénu</b></div>
<span class="txt" style="left:156px;top:579px">x<sub>1</sub> =</span>
<div class="inp" style="left:182px;top:576px">0.80</div>
<span class="txt" style="left:277px;top:579px">[m]</span>
<span class="txt" style="left:156px;top:603px">x<sub>2</sub> =</span>
<div class="inp" style="left:182px;top:600px">0.80</div>
<span class="txt" style="left:277px;top:603px">[m]</span>
<span class="txt" style="left:156px;top:627px">x<sub>3</sub> =</span>
<div class="inp" style="left:182px;top:624px">1.20</div>
<span class="txt" style="left:277px;top:627px">[m]</span>
<span class="txt" style="left:156px;top:651px">x<sub>4</sub> =</span>
<div class="inp" style="left:182px;top:648px">0.50</div>
<span class="txt" style="left:277px;top:651px">[m]</span>
<span class="txt" style="left:311px;top:579px">z<sub>1</sub> =</span>
<div class="inp" style="left:338px;top:576px">0.30</div>
<span class="txt" style="left:434px;top:579px">[m]</span>
<span class="txt" style="left:311px;top:603px">z<sub>2</sub> =</span>
<div class="inp" style="left:338px;top:600px">0.50</div>
<span class="txt" style="left:434px;top:603px">[m]</span>
<svg class="abs" style="left:0;top:0" width="1024" height="768" viewBox="0 0 800 600" font-family="'Liberation Sans',sans-serif">
<defs><pattern id="dz" width="1.5625" height="1.5625" patternUnits="userSpaceOnUse"><rect width="1.5625" height="1.5625" fill="#f4f400"/><rect width="0.64" height="0.64" fill="#2828a0"/><rect x="0.78125" y="0.78125" width="0.64" height="0.64" fill="#2828a0"/></pattern>
<pattern id="hz" width="3.36" height="3.36" patternUnits="userSpaceOnUse" patternTransform="rotate(-45)"><rect width="3.36" height="3.36" fill="#ffff00"/><rect width="3.36" height="1.45" fill="#0808d0"/></pattern></defs>
<rect x="22.7" y="419.9" width="6.6" height="3.5" fill="url(#dz)"/>
<path d="M22.7 419.9H29.3" stroke="#ff0000" stroke-width="1.5"/>
<polygon points="31.9,407.4 48.0,407.4 48.0,423.4 31.9,423.4" fill="url(#dz)"/>
<polyline points="31.9,407.4 48.0,407.4" fill="none" stroke="#ff0000" stroke-width="1.6" stroke-linejoin="round"/>
<rect x="29.3" y="407.0" width="2.6" height="16.4" fill="#ff00ff" stroke="#000" stroke-width="0.8"/>
<rect x="64.0" y="419.9" width="6.3" height="3.5" fill="url(#dz)"/>
<path d="M64.0 419.9H70.3" stroke="#ff0000" stroke-width="1.5"/>
<polygon points="72.9,407.4 89.0,399.4 89.0,423.4 72.9,423.4" fill="url(#dz)"/>
<polyline points="72.9,407.4 89.0,399.4" fill="none" stroke="#ff0000" stroke-width="1.6" stroke-linejoin="round"/>
<rect x="70.3" y="407.0" width="2.6" height="16.4" fill="#ff00ff" stroke="#000" stroke-width="0.8"/>
<rect x="105.2" y="419.9" width="6.6" height="3.5" fill="url(#dz)"/>
<path d="M105.2 419.9H111.8" stroke="#ff0000" stroke-width="1.5"/>
<polygon points="114.4,407.2 120.0,401.4 130.8,401.4 130.8,423.4 114.4,423.4" fill="url(#dz)"/>
<polyline points="114.4,407.2 120.0,401.4 130.8,401.4" fill="none" stroke="#ff0000" stroke-width="1.6" stroke-linejoin="round"/>
<rect x="111.8" y="407.0" width="2.6" height="16.4" fill="#ff00ff" stroke="#000" stroke-width="0.8"/>
<rect x="146.7" y="419.9" width="6.7" height="3.5" fill="url(#dz)"/>
<path d="M146.7 419.9H153.4" stroke="#ff0000" stroke-width="1.5"/>
<polygon points="155.9,407.2 160.5,411.5 171.8,411.5 171.8,423.4 155.9,423.4" fill="url(#dz)"/>
<polyline points="155.9,407.2 160.5,411.5 171.8,411.5" fill="none" stroke="#ff0000" stroke-width="1.6" stroke-linejoin="round"/>
<rect x="153.4" y="407.0" width="2.5" height="16.4" fill="#ff00ff" stroke="#000" stroke-width="0.8"/>
<rect x="190.8" y="419.9" width="6.4" height="3.5" fill="url(#dz)"/>
<path d="M190.8 419.9H197.2" stroke="#ff0000" stroke-width="1.5"/>
<polygon points="199.7,407.2 205.6,407.2 210.8,402.0 215.9,402.0 215.9,423.4 199.7,423.4" fill="url(#dz)"/>
<polyline points="199.7,407.2 205.6,407.2 210.8,402.0 215.9,402.0" fill="none" stroke="#ff0000" stroke-width="1.6" stroke-linejoin="round"/>
<rect x="197.2" y="407.0" width="2.5" height="16.4" fill="#ff00ff" stroke="#000" stroke-width="0.8"/>
<rect x="231.8" y="419.9" width="6.6" height="3.5" fill="url(#dz)"/>
<path d="M231.8 419.9H238.4" stroke="#ff0000" stroke-width="1.5"/>
<polygon points="241.0,407.2 244.0,406.3 248.2,402.0 251.8,402.0 254.8,404.8 256.9,404.8 256.9,423.4 241.0,423.4" fill="url(#dz)"/>
<polyline points="241.0,407.2 244.0,406.3 248.2,402.0 251.8,402.0 254.8,404.8 256.9,404.8" fill="none" stroke="#ff0000" stroke-width="1.6" stroke-linejoin="round"/>
<rect x="238.4" y="407.0" width="2.6" height="16.4" fill="#ff00ff" stroke="#000" stroke-width="0.8"/>
<rect x="273.3" y="419.9" width="6.7" height="3.5" fill="url(#dz)"/>
<path d="M273.3 419.9H280.0" stroke="#ff0000" stroke-width="1.5"/>
<polygon points="282.5,407.2 284.0,407.2 287.6,403.8 291.7,403.8 296.3,399.7 298.4,399.7 298.4,423.4 282.5,423.4" fill="url(#dz)"/>
<polyline points="282.5,407.2 284.0,407.2 287.6,403.8 291.7,403.8 296.3,399.7 298.4,399.7" fill="none" stroke="#ff0000" stroke-width="1.6" stroke-linejoin="round"/>
<rect x="280.0" y="407.0" width="2.5" height="16.4" fill="#ff00ff" stroke="#000" stroke-width="0.8"/>
<rect x="315.1" y="419.9" width="6.4" height="3.5" fill="url(#dz)"/>
<path d="M315.1 419.9H321.5" stroke="#ff0000" stroke-width="1.5"/>
<polygon points="324.0,406.9 330.2,406.9 334.3,411.3 339.9,411.3 339.9,423.4 324.0,423.4" fill="url(#dz)"/>
<polyline points="324.0,406.9 330.2,406.9 334.3,411.3 339.9,411.3" fill="none" stroke="#ff0000" stroke-width="1.6" stroke-linejoin="round"/>
<rect x="321.5" y="407.0" width="2.5" height="16.4" fill="#ff00ff" stroke="#000" stroke-width="0.8"/>
<rect x="356.4" y="419.9" width="6.2" height="3.5" fill="url(#dz)"/>
<path d="M356.4 419.9H362.6" stroke="#ff0000" stroke-width="1.5"/>
<polygon points="365.1,407.2 373.4,407.2 373.4,413.8 381.1,413.8 381.1,423.4 365.1,423.4" fill="url(#dz)"/>
<polyline points="365.1,407.2 373.4,407.2 373.4,413.8 381.1,413.8" fill="none" stroke="#ff0000" stroke-width="1.6" stroke-linejoin="round"/>
<path d="M373.6 407.0V413.8" stroke="#0000a0" stroke-width="2"/>
<rect x="362.6" y="407.0" width="2.5" height="16.4" fill="#ff00ff" stroke="#000" stroke-width="0.8"/>
<rect x="398.1" y="419.9" width="6.1" height="3.5" fill="url(#dz)"/>
<path d="M398.1 419.9H404.2" stroke="#ff0000" stroke-width="1.5"/>
<polygon points="406.7,407.2 409.2,406.9 414.1,398.9 418.4,398.9 418.4,412.6 422.9,412.6 422.9,423.4 406.7,423.4" fill="url(#dz)"/>
<polyline points="406.7,407.2 409.2,406.9 414.1,398.9 418.4,398.9 418.4,412.6 422.9,412.6" fill="none" stroke="#ff0000" stroke-width="1.6" stroke-linejoin="round"/>
<path d="M418.6 398.6V412.6" stroke="#0000a0" stroke-width="2"/>
<rect x="404.2" y="407.0" width="2.5" height="16.4" fill="#ff00ff" stroke="#000" stroke-width="0.8"/>
<rect x="439.4" y="419.9" width="5.8" height="3.5" fill="url(#dz)"/>
<path d="M439.4 419.9H445.2" stroke="#ff0000" stroke-width="1.5"/>
<polygon points="447.6,407.2 451.3,406.9 454.9,403.9 458.7,407.2 464.1,400.6 464.1,423.4 447.6,423.4" fill="url(#dz)"/>
<polyline points="447.6,407.2 451.3,406.9 454.9,403.9 458.7,407.2 464.1,400.6" fill="none" stroke="#ff0000" stroke-width="1.6" stroke-linejoin="round"/>
<path d="M461.5 403.8L464.3 400.3" stroke="#ff9000" stroke-width="1.4"/>
<rect x="445.2" y="407.0" width="2.4" height="16.4" fill="#ff00ff" stroke="#000" stroke-width="0.8"/>
<rect x="33.6" y="512.4" width="16" height="12" fill="url(#hz)"/>
<path d="M33.6 512.4H49.6" stroke="#ff0000" stroke-width="1.5"/>
<polygon points="53.6,480 61,479.4 69,472 80,472 87,464.6 91.6,464.6 91.6,524.4 53.6,524.4" fill="url(#hz)"/>
<polyline points="53.6,480 61,479.6 69,472 80,472 87,464.6 91.6,464.6" fill="none" stroke="#ff0000" stroke-width="1.7" stroke-linejoin="round"/>
<rect x="49.8" y="480" width="3.6" height="44.4" fill="#ff00ff" stroke="#000" stroke-width="0.7"/>
<path d="M53.6 458H86.4M53.6 455V461M61 455.5V460.5M69 455.5V460.5M80 455.5V460.5M86.4 455V461" stroke="#0000ff" stroke-width="0.9" fill="none"/>
<path d="M41 470V480M38.6 470H43.4M38.6 480H43.4" stroke="#0000ff" stroke-width="0.9" fill="none"/>
<path d="M99.4 464.6V472M97 464.6H101.8M97 472H101.8" stroke="#0000ff" stroke-width="0.9" fill="none"/>
<text x="45.0" y="455.2" fill="#0000ff" font-size="9.2">x<tspan font-size="6.2" dy="1.8">1</tspan></text>
<text x="62.0" y="467.4" fill="#0000ff" font-size="9.2">x<tspan font-size="6.2" dy="1.8">2</tspan></text>
<text x="69.6" y="455.2" fill="#0000ff" font-size="9.2">x<tspan font-size="6.2" dy="1.8">3</tspan></text>
<text x="88.6" y="455.6" fill="#0000ff" font-size="9.2">x<tspan font-size="6.2" dy="1.8">4</tspan></text>
<text x="26.6" y="477.6" fill="#0000ff" font-size="9.2">z<tspan font-size="6.2" dy="1.8">1</tspan></text>
<text x="96.6" y="481.0" fill="#0000ff" font-size="9.2">z<tspan font-size="6.2" dy="1.8">2</tspan></text>
</svg>
<div class="hl" style="left:4px;top:746px;width:1016px;background:#aca899"></div>
<div class="hl" style="left:4px;top:747px;width:1016px;background:#fff"></div>
<svg class="abs" style="left:1005px;top:750px" width="14" height="14"><path d="M13 2L2 13M13 6L6 13M13 10L10 13" stroke="#aca899" stroke-width="1.500"/><path d="M13 3L3 13M13 7L7 13M13 11L11 13" stroke="#fff" stroke-width="1"/></svg>
<!--STATUS-->
<div id="bl" class="abs"></div><div id="br" class="abs"></div><div id="bb" class="abs"></div>
</div>
<svg style="position:absolute;left:0;top:0" width="800" height="600" viewBox="0 0 800 600" fill="none" stroke="#ff0000" stroke-width="2.4">
<rect x="6" y="23.900" width="357.700" height="56.300"/>
<rect x="709.100" y="81.600" width="87.400" height="310.900"/>
<rect x="6.100" y="389.400" width="481" height="193"/>
</svg>

</body>
</html>
